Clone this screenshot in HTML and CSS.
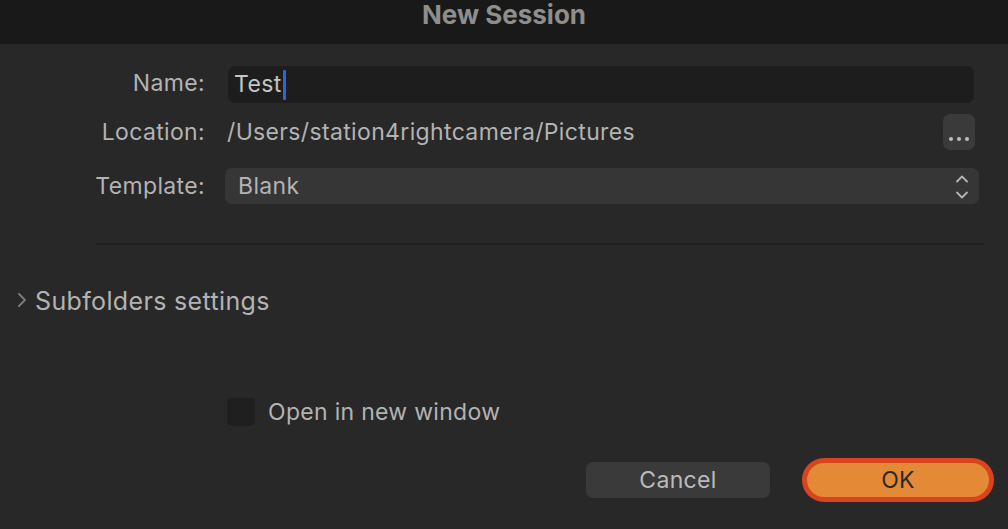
FILE: index.html
```html
<!DOCTYPE html>
<html>
<head>
<meta charset="utf-8">
<link rel="stylesheet" href="styles.css">
</head>
<body>
<div class="dialog">
  <div class="titlebar">New Session</div>
  <div class="content">
    <div class="row row-name">
      <div class="label">Name:</div>
      <div class="input">Test<span class="caret"></span></div>
    </div>
    <div class="row row-location">
      <div class="label">Location:</div>
      <div class="path">/Users/station4rightcamera/Pictures</div>
      <div class="dots-btn"><span></span><span></span><span></span></div>
    </div>
    <div class="row row-template">
      <div class="label">Template:</div>
      <div class="select">
        <span>Blank</span>
        <svg class="updown" width="14" height="26" viewBox="0 0 14 26">
          <path d="M2 7.5 L7 2.5 L12 7.5" fill="none" stroke="#b4b4b4" stroke-width="1.8" stroke-linecap="round" stroke-linejoin="round"/>
          <path d="M2 18.5 L7 23.5 L12 18.5" fill="none" stroke="#b4b4b4" stroke-width="1.8" stroke-linecap="round" stroke-linejoin="round"/>
        </svg>
      </div>
    </div>
    <div class="separator"></div>
    <div class="disclosure">
      <svg class="chev" width="10" height="16" viewBox="0 0 10 16">
        <path d="M2 2 L8 8 L2 14" fill="none" stroke="#7c7c7c" stroke-width="1.8" stroke-linecap="round" stroke-linejoin="round"/>
      </svg>
      <span>Subfolders settings</span>
    </div>
    <div class="check-row">
      <div class="checkbox"></div>
      <span>Open in new window</span>
    </div>
    <div class="buttons">
      <div class="btn cancel">Cancel</div>
      <div class="ok-ring"><div class="btn ok">OK</div></div>
    </div>
  </div>
</div>
</body>
</html>
```
FILE: styles.css
```css
* { box-sizing: border-box; }
html, body {
  margin: 0;
  padding: 0;
  background: #282828;
  width: 1008px;
  height: 529px;
  overflow: hidden;
}
body {
  font-family: "Inter", "Liberation Sans", sans-serif;
  color: #b3b3b3;
  letter-spacing: 0.35px;
}
.titlebar {
  height: 44px;
  background: #191919;
  color: #8e8e8e;
  font-weight: 700;
  font-size: 26px;
  text-align: center;
  line-height: 30px;
  letter-spacing: 0;
}
.content {
  display: flex;
  flex-direction: column;
}
.row {
  display: flex;
  align-items: center;
  font-size: 23px;
}
.label {
  width: 205px;
  text-align: right;
  flex: none;
  margin-right: 20px;
  margin-top: -3px;
}
.row-name { margin-top: 22px; height: 37px; }
.row-location { margin-top: 11px; height: 36px; }
.row-template { margin-top: 18px; height: 36px; }
.row-location .label, .row-template .label { margin-top: -1px; }
.input {
  margin-left: 3px;
  width: 746px;
  height: 37px;
  background: #1d1d1d;
  border-radius: 7px;
  padding-left: 6px;
  padding-bottom: 2px;
  display: flex;
  align-items: center;
  color: #c4c4c4;
}
.caret {
  display: inline-block;
  width: 3px;
  height: 30px;
  background: #2f63d8;
  margin-left: 1px;
  margin-top: 2px;
  border-radius: 1px;
}
.path {
  flex: 1;
  margin-left: 2px;
}
.dots-btn {
  width: 32px;
  height: 36px;
  background: #3a3a3a;
  border-radius: 7px;
  margin-right: 33px;
  display: flex;
  justify-content: center;
  align-items: flex-end;
  gap: 4px;
  padding-bottom: 9px;
}
.dots-btn span {
  width: 4px;
  height: 4px;
  border-radius: 50%;
  background: #bdbdbd;
}
.select {
  width: 754px;
  height: 36px;
  background: #363636;
  border-radius: 7px;
  display: flex;
  align-items: center;
  justify-content: space-between;
  padding-left: 13px;
  padding-right: 10px;
}
.updown { margin-top: 1px; }
.separator {
  height: 2px;
  background: #1f1f1f;
  margin: 39px 24px 0 96px;
}
.disclosure {
  display: flex;
  align-items: center;
  margin-top: 41px;
  height: 30px;
  font-size: 25px;
  padding-left: 17px;
}
.chev { margin-right: 8px; margin-top: -2px; }
.check-row {
  display: flex;
  align-items: center;
  margin-top: 82px;
  height: 28px;
  padding-left: 227px;
  font-size: 23px;
  letter-spacing: 0.3px;
}
.checkbox {
  width: 28px;
  height: 28px;
  background: #1f1f1f;
  border-radius: 5px;
  margin-right: 13px;
}
.buttons {
  display: flex;
  align-items: center;
  margin-top: 32px;
  padding-left: 586px;
  font-size: 23px;
}
.btn {
  display: flex;
  align-items: center;
  justify-content: center;
}
.cancel {
  width: 184px;
  height: 36px;
  background: #3a3a3a;
  border-radius: 7px;
  color: #bababa;
  margin-right: 32px;
}
.ok-ring {
  width: 192px;
  height: 44px;
  border-radius: 22px;
  background: #d8441f;
  padding: 5px;
}
.ok {
  width: 100%;
  height: 100%;
  border-radius: 17px;
  background: #e48a37;
  color: #2a2a2a;
}
```
